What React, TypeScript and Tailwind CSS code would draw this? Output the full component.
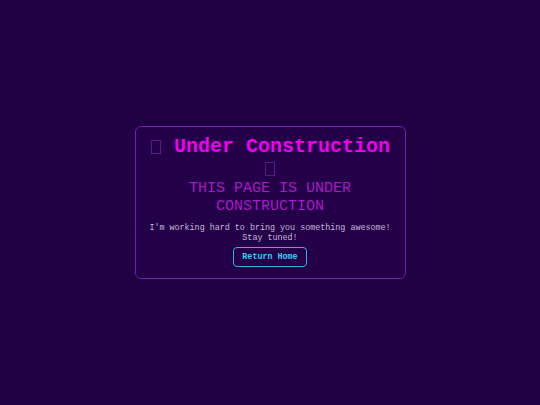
function Tofu() {
  return (
    <span className="inline-flex w-[12px] justify-center align-[-2px]">
      <span className="inline-block h-[14px] w-[10px] border border-[#5c1a86]" />
    </span>
  );
}

export default function App() {
  return (
    <div
      className="min-h-screen w-full flex items-center justify-center bg-[#1f0042]"
      style={{ fontFamily: '"Liberation Mono", "Courier New", monospace' }}
    >
      <div className="w-[271px] rounded-md border border-[#6d1fb0] bg-[#230048] px-3 pt-[9px] pb-[11px] text-center">
        <h1 className="text-[20px] leading-[22px] font-bold text-[#f000f0]">
          <Tofu /> Under Construction <Tofu />
        </h1>
        <h2 className="text-[15px] leading-[18px] text-[#a61bc4]">THIS PAGE IS UNDER CONSTRUCTION</h2>
        <p className="mt-[7px] text-[8.4px] leading-[10px] text-[#c8b8d8]">
          I'm working hard to bring you something awesome! Stay tuned!
        </p>
        <button className="mt-[3px] rounded-sm border border-[#2ab8e0] px-[8px] py-[4px] text-[8.4px] leading-[10px] font-bold text-[#34d0f0]">
          Return Home
        </button>
      </div>
    </div>
  );
}
